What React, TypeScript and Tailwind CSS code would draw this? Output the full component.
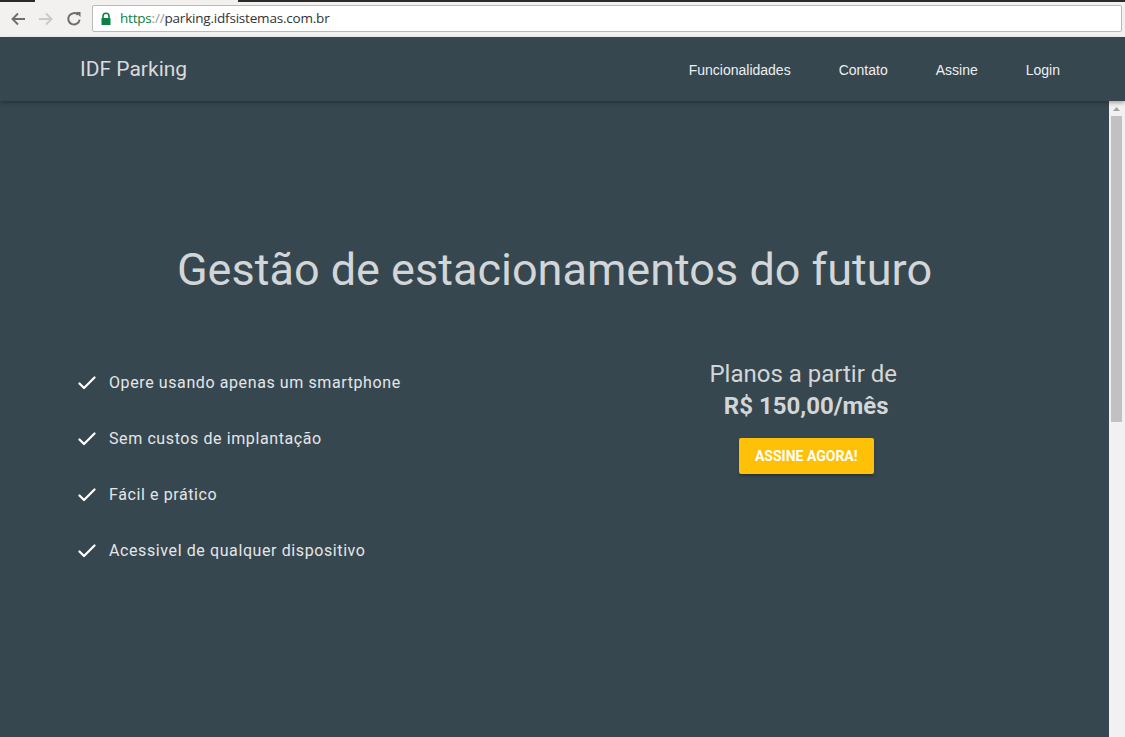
import React from "react";

const features = [
  "Opere usando apenas um smartphone",
  "Sem custos de implantação",
  "Fácil e prático",
  "Acessivel de qualquer dispositivo",
];

const links = ["Funcionalidades", "Contato", "Assine", "Login"];

function Check() {
  return (
    <svg width="18" height="14" viewBox="0 0 18 14" className="shrink-0">
      <polyline
        points="1.5,7.5 6,12 16.5,1.5"
        fill="none"
        stroke="#ffffff"
        strokeWidth="2.2"
        strokeLinecap="round"
        strokeLinejoin="round"
      />
    </svg>
  );
}

function BrowserBar() {
  return (
    <div className="relative flex h-[37px] items-center bg-[#f2f1f0]">
      <div className="absolute left-0 top-0 h-[2px] w-[35px] bg-[#2b2b2b]" />
      <div className="absolute left-[238px] right-0 top-0 h-[2px] bg-[#2b2b2b]" />
      <div className="flex items-center gap-[8px] pl-[8px]">
        <svg width="20" height="20" viewBox="0 0 20 20">
          <path d="M17 10H4.5M10 4.5L4.5 10l5.5 5.5" fill="none" stroke="#6e6e6e" strokeWidth="1.9" />
        </svg>
        <svg width="20" height="20" viewBox="0 0 20 20">
          <path d="M3 10h12.5M10 4.5l5.5 5.5-5.5 5.5" fill="none" stroke="#cacaca" strokeWidth="1.9" />
        </svg>
        <svg width="20" height="20" viewBox="0 0 20 20">
          <path d="M15.6 10.6A5.7 5.7 0 1 1 14 5.8" fill="none" stroke="#6e6e6e" strokeWidth="2" />
          <path d="M11.5 3h5v5z" fill="#6e6e6e" />
        </svg>
      </div>
      <div className="ml-[8px] mr-[3px] flex h-[27px] flex-1 items-center rounded-[2px] border border-[#b9b9b9] bg-white pl-[7px]">
        <svg width="12" height="14" viewBox="0 0 12 14" className="mr-[8px]">
          <path d="M3 6V4.2a3 3 0 0 1 6 0V6" fill="none" stroke="#0b8043" strokeWidth="1.6" />
          <rect x="1.5" y="6" width="9" height="7" rx="0.5" fill="#0b8043" />
        </svg>
        <span className="text-[13.5px] tracking-[-0.2px] text-[#333] [font-family:'Open_Sans',sans-serif]">
          <span className="text-[#0b8043]">https</span>
          <span className="text-[#999]">://</span>parking.idfsistemas.com.br
        </span>
      </div>
    </div>
  );
}

export default function App() {
  return (
    <div className="flex h-[737px] w-[1125px] flex-col overflow-hidden bg-[#37474f] [font-family:Roboto,sans-serif]">
      <BrowserBar />

      <nav className="relative z-10 flex h-[64px] shrink-0 items-center justify-between bg-[#37474f] pl-[80px] pr-[41px] pt-[2px] shadow-[0_2px_4px_rgba(0,0,0,0.3)]">
        <span className="text-[21px] text-[#d7dbdd]">IDF Parking</span>
        <ul className="flex">
          {links.map((l) => (
            <li
              key={l}
              className="px-6 text-[14px] text-[#eceff1] [font-family:'Liberation_Sans',Arial,sans-serif]"
            >
              {l}
            </li>
          ))}
        </ul>
      </nav>

      <div className="flex flex-1">
        <main className="flex-1">
          <h1 className="pt-[144px] text-center text-[45px] leading-[50px] text-[#d3d6d8]">
            Gestão de estacionamentos do futuro
          </h1>

          <div className="mx-auto mt-[63px] grid w-[983px] grid-cols-2">
            <ul className="flex flex-col gap-8 pl-[15px] pt-[13px]">
              {features.map((f) => (
                <li key={f} className="flex h-6 items-center gap-[13px]">
                  <Check />
                  <span className="text-[16px] tracking-[0.6px] text-[#e3e6e8]">{f}</span>
                </li>
              ))}
            </ul>

            <div className="flex flex-col items-center pl-[12px]">
              <p className="-ml-[6px] text-[24px] leading-[32px] text-[#d3d6d8]">Planos a partir de</p>
              <p className="text-[24px] font-bold leading-[32px] text-[#d3d6d8]">R$ 150,00/mês</p>
              <button className="mt-4 flex h-9 w-[135px] items-center justify-center rounded-[2px] bg-[#ffc107] text-[14px] font-bold text-white shadow-[0_2px_3px_rgba(0,0,0,0.3)]">
                ASSINE AGORA!
              </button>
            </div>
          </div>
        </main>

        <div className="flex w-[16px] flex-col bg-[#f1f1f1] pl-[2px] pr-[3px]">
          <div className="flex h-[15px] items-center justify-center">
            <svg width="7" height="4" viewBox="0 0 7 4">
              <polygon points="0,4 3.5,0 7,4" fill="#a3a3a3" />
            </svg>
          </div>
          <div className="h-[306px] bg-[#c1c1c1]" />
        </div>
      </div>
    </div>
  );
}
